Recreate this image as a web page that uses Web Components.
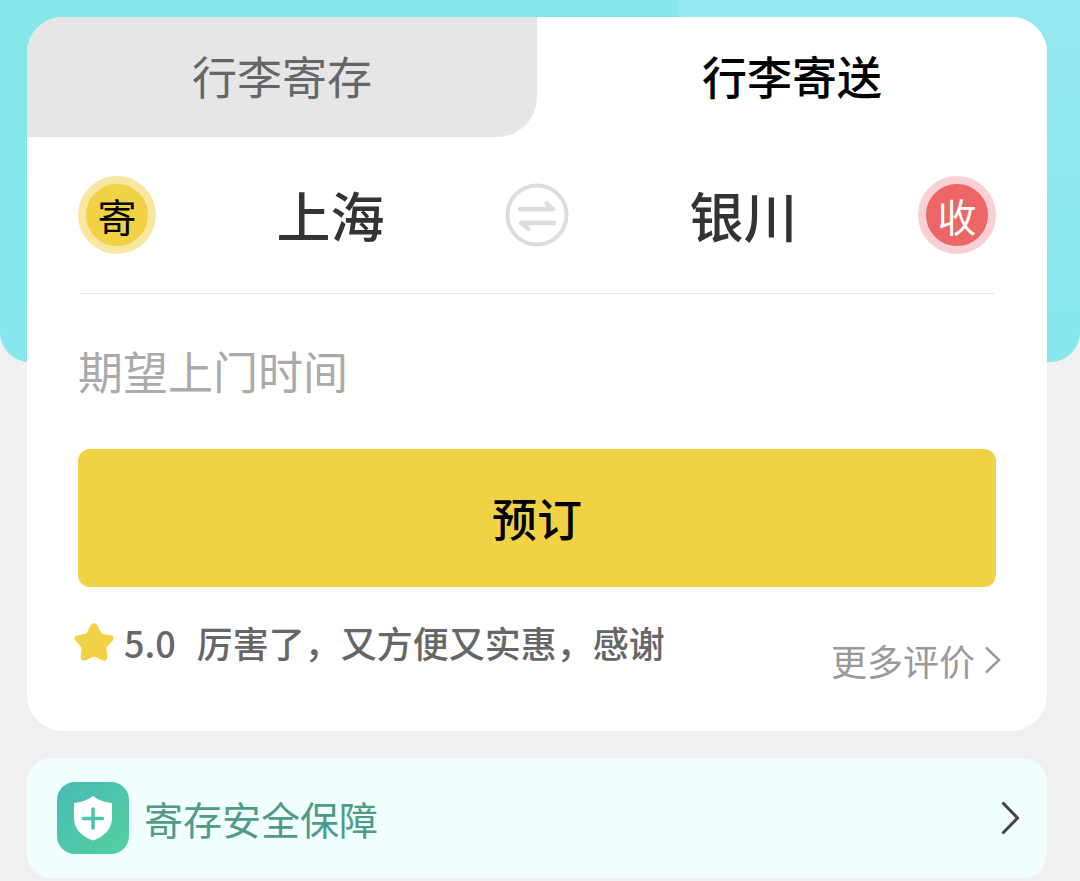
<!DOCTYPE html>
<html lang="zh-CN">
<head>
<meta charset="utf-8">
<meta name="viewport" content="width=device-width, initial-scale=1">
<title>行李寄送</title>
<style>
  body {
    margin: 0;
    background: #f0f0f0;
    font-family: "Noto Sans CJK SC", "Noto Sans", sans-serif;
    color: #333;
  }
</style>
</head>
<body>
<luggage-page>
  <booking-card>
    <tab-bar slot="tabs">
      <tab-item>行李寄存</tab-item>
      <tab-item selected>行李寄送</tab-item>
    </tab-bar>
    <route-picker>
      <round-badge slot="from-badge" kind="send">寄</round-badge>
      <span slot="from">上海</span>
      <span slot="to">银川</span>
      <round-badge slot="to-badge" kind="receive">收</round-badge>
    </route-picker>
    <time-field label="期望上门时间"></time-field>
    <primary-button>预订</primary-button>
    <review-row>
      <span slot="score">5.0</span>
      <span slot="comment">厉害了，又方便又实惠，感谢</span>
      <span slot="more">更多评价</span>
    </review-row>
  </booking-card>
  <safety-banner>寄存安全保障</safety-banner>
</luggage-page>

<script>
const define = (name, html, setup) => {
  const template = document.createElement('template');
  template.innerHTML = `<style>
    :host { display: block; box-sizing: border-box; }
    *, ::before, ::after { box-sizing: border-box; }
    button, input { font: inherit; color: inherit; background: none; border: 0; margin: 0; padding: 0; }
    button { cursor: pointer; }
    a { color: inherit; text-decoration: none; }
    svg { display: block; flex: none; }
  </style>${html}`;
  customElements.define(name, class extends HTMLElement {
    constructor() {
      super();
      this.attachShadow({ mode: 'open' }).append(template.content.cloneNode(true));
    }
    connectedCallback() {
      if (setup) setup(this, this.shadowRoot);
    }
  });
};

define('luggage-page', `
  <style>
    :host { display: grid; }
    .hero {
      grid-area: 1 / 1;
      align-self: start;
      height: 362px;
      border-radius: 0 0 30px 30px;
      background:
        linear-gradient(to bottom, transparent 20px, #86e8ec 340px),
        radial-gradient(circle at 100% 0, #95e8ef 400px, transparent 404px),
        #84e8eb;
    }
    main {
      grid-area: 1 / 1;
      display: flex;
      flex-direction: column;
      gap: 27px;
      padding: 17px 33px 3px 27px;
    }
  </style>
  <div class="hero"></div>
  <main><slot></slot></main>`);

define('booking-card', `
  <style>
    :host { background: #fff; border-radius: 36px; overflow: hidden; }
    .body { padding: 0 51px 50px; }
  </style>
  <slot name="tabs"></slot>
  <div class="body"><slot></slot></div>`);

define('tab-bar', `
  <style>
    :host { display: flex; }
  </style>
  <slot></slot>`);

define('tab-item', `
  <style>
    :host { flex: 1; }
    button {
      display: block;
      width: 100%;
      height: 120px;
      padding-bottom: 2px;
      font-size: 45px;
      line-height: 60px;
      color: #666;
      background: #e6e6e6;
      border-radius: 0 0 40px 0;
    }
    :host([selected]) button { color: #000; font-weight: 500; background: #fff; }
  </style>
  <button type="button"><slot></slot></button>`,
  (host, root) => root.querySelector('button').setAttribute('aria-pressed', host.hasAttribute('selected')));

define('round-badge', `
  <style>
    :host {
      display: flex;
      align-items: center;
      justify-content: center;
      width: 78px;
      height: 78px;
      border: 8px solid #f9e7a0;
      border-radius: 50%;
      background: #f0d244;
      color: #000;
      font-size: 39px;
      line-height: 60px;
    }
    :host([kind="receive"]) { background: #eb6664; border-color: #f8d0d1; color: #fff; }
  </style>
  <slot></slot>`);

define('route-picker', `
  <style>
    :host { display: block; }
    .route { display: flex; align-items: center; padding: 39px 0; }
    .city { flex: 1; font-size: 54px; line-height: 78px; font-weight: 500; color: #333; }
    hr { height: 1px; margin: 0 2px; border: 0; background: #e5e5e5; }
  </style>
  <div class="route">
    <slot name="from-badge"></slot>
    <button class="city" type="button"><slot name="from"></slot></button>
    <button type="button" aria-label="交换">
      <svg width="64" height="64" viewBox="0 0 64 64" fill="none" stroke="#dcdcdc">
        <circle cx="32" cy="32" r="29.5" stroke-width="4"/>
        <path d="M15 26H48L41.500 20.500M49 40H16L23 45.500" stroke-width="4.500" stroke-linecap="round" stroke-linejoin="round"/>
      </svg>
    </button>
    <button class="city" type="button"><slot name="to"></slot></button>
    <slot name="to-badge"></slot>
  </div>
  <hr>`);

define('time-field', `
  <style>
    input { display: block; width: 100%; height: 155px; padding-bottom: 2px; font-size: 45px; line-height: 60px; outline: 0; }
    input::placeholder { color: #aaa; opacity: 1; }
  </style>
  <input type="text" readonly>`,
  (host, root) => {
    const input = root.querySelector('input');
    input.placeholder = host.getAttribute('label');
    input.setAttribute('aria-label', host.getAttribute('label'));
  });

define('primary-button', `
  <style>
    button {
      display: block;
      width: 100%;
      height: 138px;
      border-radius: 12px;
      background: #f0d244;
      color: #000;
      font-size: 45px;
      line-height: 60px;
      font-weight: 500;
    }
  </style>
  <button type="button"><slot></slot></button>`);

define('review-row', `
  <style>
    :host {
      display: flex;
      justify-content: space-between;
      padding-top: 28px;
      font-size: 36px;
      line-height: 54px;
    }
    .review { display: flex; align-items: center; height: 54px; margin-left: -4px; font-weight: 500; color: #666; }
    .score { margin: 0 21px 0 10px; }
    a { display: flex; align-items: center; gap: 9px; margin: 18px -6px -6px 0; color: #999; }
  </style>
  <div class="review">
    <svg width="40" height="40" viewBox="0 0 40 40" fill="#f0d244">
      <path d="M16.500 3.800Q20 -1.800 23.500 3.800L27 10.500Q27.700 11.700 29 12L36.300 13.300Q42 15 38 19.500L33 25Q32.200 26 32.400 27.300L33.400 34.500Q33.300 40 28 38.300L21.200 34.900Q20 34.300 18.800 34.900L12 38.300Q6.700 40 6.600 34.500L7.600 27.300Q7.800 26 7 25L2 19.500Q-2 15 3.700 13.300L11 12Q12.300 11.700 13 10.500Z"/>
    </svg>
    <span class="score"><slot name="score"></slot></span>
    <slot name="comment"></slot>
  </div>
  <a href="#reviews">
    <slot name="more"></slot>
    <svg width="18" height="28" viewBox="0 0 18 28" fill="none" stroke="#999" stroke-width="2.500">
      <path d="M2 1.500L15 14L2 26.500"/>
    </svg>
  </a>`);

define('safety-banner', `
  <style>
    a {
      display: flex;
      align-items: center;
      gap: 15px;
      height: 120px;
      padding: 0 27px 0 30px;
      border-radius: 24px;
      background: #f0fefe;
      color: #4f9a88;
      font-size: 39px;
      line-height: 60px;
    }
    .label { flex: 1; }
  </style>
  <a href="#safety">
    <svg width="72" height="72" viewBox="0 0 72 72">
      <defs>
        <linearGradient id="tile" x1="0" y1="0" x2="1" y2="1">
          <stop offset="0.100" stop-color="#49bdb3"/>
          <stop offset="0.900" stop-color="#51d0a0"/>
        </linearGradient>
      </defs>
      <rect width="72" height="72" rx="18" fill="url(#tile)"/>
      <path d="M36 14Q44 20 55 21V37Q54 52 36 58.500Q18 52 17 37V21Q28 20 36 14Z" fill="#fff"/>
      <path d="M36 27V46M26.500 36.500H45.500" stroke="#4bc5aa" stroke-width="3.500" stroke-linecap="round"/>
    </svg>
    <span class="label"><slot></slot></span>
    <svg width="19" height="34" viewBox="0 0 19 34" fill="none" stroke="#444" stroke-width="3">
      <path d="M1.500 1.500L16.500 17L1.500 32.500"/>
    </svg>
  </a>`);
</script>
</body>
</html>
